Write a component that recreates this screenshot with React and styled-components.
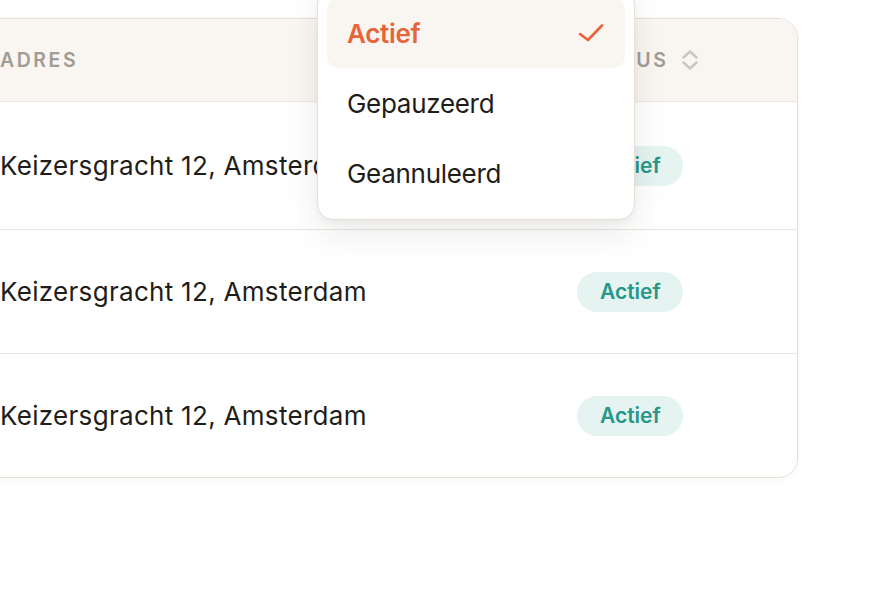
import React from "react";
import styled, { createGlobalStyle } from "styled-components";

const GlobalStyle = createGlobalStyle`
  html, body {
    margin: 0;
    padding: 0;
    background: #ffffff;
    overflow: hidden;
  }
  body {
    font-family: "Inter", "Noto Sans", sans-serif;
    color: #1f1d1a;
    -webkit-font-smoothing: antialiased;
  }
`;

const Stage = styled.div`
  position: relative;
  width: 880px;
  height: 600px;
  overflow: hidden;
  padding-top: 18px;
  box-sizing: border-box;
`;

const Card = styled.div`
  margin-left: -40px;
  width: 838px;
  box-sizing: border-box;
  border: 1.5px solid #e6dfd6;
  border-radius: 20px;
  overflow: hidden;
  background: #ffffff;
  box-shadow: 0 2px 6px rgba(60, 40, 20, 0.04);
`;

const Row = styled.div`
  display: grid;
  grid-template-columns: 616px 1fr;
  align-items: center;
  height: ${(p) => p.$h}px;
  background: ${(p) => (p.$head ? "#f9f6f1" : "#ffffff")};
  border-bottom: ${(p) => (p.$last ? "none" : "1.5px solid #ebe6e0")};
  box-sizing: border-box;
`;

const Cell = styled.div`
  padding-left: ${(p) => (p.$first ? "39px" : "0")};
  display: flex;
  align-items: center;
  gap: 13px;
`;

const HeadLabel = styled.span`
  font-size: 19.5px;
  font-weight: 600;
  letter-spacing: 0.13em;
  text-transform: uppercase;
  color: #a19b93;
`;

const Address = styled.span`
  font-size: 26px;
  font-weight: 400;
  color: #1f1d1a;
  letter-spacing: 0.3px;
`;

const Badge = styled.span`
  display: inline-flex;
  align-items: center;
  justify-content: center;
  height: 40px;
  padding: 0 22px 0 23px;
  border-radius: 20px;
  background: #e5f3f1;
  color: #27978a;
  font-size: 21px;
  font-weight: 600;
`;

const Menu = styled.div`
  position: absolute;
  left: 317px;
  top: -12px;
  width: 318px;
  box-sizing: border-box;
  padding: 9px 9px 11px;
  background: #ffffff;
  border: 1.5px solid #e6dfd6;
  border-radius: 16px;
  box-shadow: 0 14px 34px rgba(40, 30, 20, 0.09), 0 2px 6px rgba(40, 30, 20, 0.04);
  display: flex;
  flex-direction: column;
`;

const Item = styled.div`
  display: flex;
  align-items: center;
  justify-content: space-between;
  height: 70px;
  padding: 0 21px 0 20px;
  border-radius: 12px;
  background: ${(p) => (p.$selected ? "#f9f6f1" : "transparent")};
  color: ${(p) => (p.$selected ? "#e8633a" : "#1f1d1a")};
  font-size: 26px;
  font-weight: ${(p) => (p.$selected ? 600 : 400)};
  letter-spacing: -0.3px;
`;

const SortIcon = () => (
  <svg width="18" height="22" viewBox="0 0 18 22" fill="none">
    <path d="M2.5 8.5 L9 2.5 L15.5 8.5" stroke="#cbc5bd" strokeWidth="2.4" strokeLinecap="round" strokeLinejoin="round" />
    <path d="M2.5 13.5 L9 19.5 L15.5 13.5" stroke="#cbc5bd" strokeWidth="2.4" strokeLinecap="round" strokeLinejoin="round" />
  </svg>
);

const Check = () => (
  <svg width="26" height="20" viewBox="0 0 26 20" fill="none">
    <path d="M2 11 L10 17 L24 2.5" stroke="#e8633a" strokeWidth="2.6" strokeLinecap="round" strokeLinejoin="round" />
  </svg>
);

const rows = [
  { h: 128, addr: "Keizersgracht 12, Amsterdam" },
  { h: 124, addr: "Keizersgracht 12, Amsterdam" },
  { h: 123, addr: "Keizersgracht 12, Amsterdam", last: true },
];

const options = [
  { label: "Actief", selected: true },
  { label: "Gepauzeerd" },
  { label: "Geannuleerd" },
];

export default function App() {
  return (
    <>
      <GlobalStyle />
      <Stage>
        <Card>
          <Row $head $h={83}>
            <Cell $first>
              <HeadLabel>Adres</HeadLabel>
            </Cell>
            <Cell>
              <HeadLabel>Status</HeadLabel>
              <SortIcon />
            </Cell>
          </Row>
          {rows.map((r, i) => (
            <Row key={i} $h={r.h} $last={r.last}>
              <Cell $first>
                <Address>{r.addr}</Address>
              </Cell>
              <Cell>
                <Badge>Actief</Badge>
              </Cell>
            </Row>
          ))}
        </Card>
        <Menu>
          {options.map((o) => (
            <Item key={o.label} $selected={o.selected}>
              <span>{o.label}</span>
              {o.selected && <Check />}
            </Item>
          ))}
        </Menu>
      </Stage>
    </>
  );
}
